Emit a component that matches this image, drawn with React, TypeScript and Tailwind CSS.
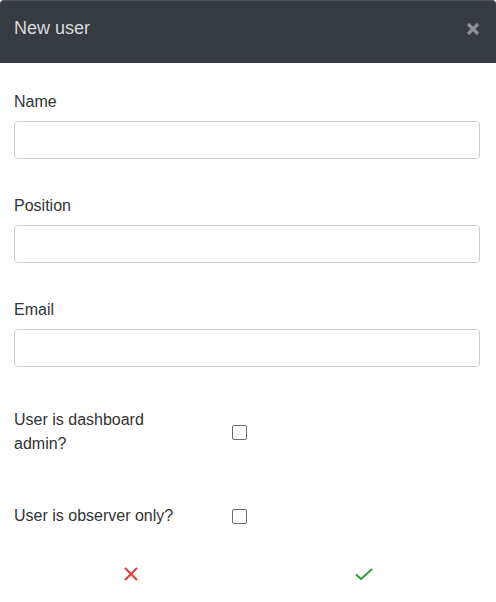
import { useState } from 'react';

const FONT = { fontFamily: '"Liberation Sans", Arial, sans-serif' };

function Field({ label }: { label: string }) {
  const [value, setValue] = useState('');
  return (
    <div className="flex flex-col gap-[7px]">
      <label className="text-[16px] leading-6 text-[#333]">{label}</label>
      <input
        value={value}
        onChange={(e) => setValue(e.target.value)}
        className="h-[38px] w-full rounded-[4px] border border-[#ccd0d6] bg-white px-3 text-[15px] outline-none focus:border-[#66afe9]"
      />
    </div>
  );
}

function CheckRow({ label }: { label: string }) {
  const [checked, setChecked] = useState(false);
  return (
    <div className="flex items-center">
      <span className="w-[170px] text-[16px] leading-6 text-[#333]">{label}</span>
      <button
        type="button"
        onClick={() => setChecked((c) => !c)}
        className="ml-[48px] flex h-[15px] w-[15px] items-center justify-center rounded-[2px] border border-[#6b6b6b] bg-white"
      >
        {checked && <span className="h-[7px] w-[7px] bg-[#333]" />}
      </button>
    </div>
  );
}

export default function App() {
  return (
    <div className="h-[602px] w-[496px] bg-white" style={FONT}>
      <div className="flex h-[63px] items-start justify-between rounded-t-[4px] border-t border-[#4b5058] bg-[#363a41] pl-[14px] pr-[16px] pt-[15px]">
        <h1 className="text-[18px] leading-6 text-[#d9dadc]">New user</h1>
        <button type="button" className="mt-[6px] text-[#8e9094]" title="Close">
          <svg width="14" height="14" viewBox="0 0 14 14">
            <path d="M2 2 L12 12 M12 2 L2 12" stroke="currentColor" strokeWidth="3.2" />
          </svg>
        </button>
      </div>

      <div className="flex flex-col pl-[14px] pr-[16px] pt-[27px]">
        <div className="flex flex-col gap-[35px]">
          <Field label="Name" />
          <Field label="Position" />
          <Field label="Email" />
        </div>

        <div className="mt-[41px] flex flex-col gap-[48px]">
          <CheckRow label="User is dashboard admin?" />
          <CheckRow label="User is observer only?" />
        </div>

        <div className="mt-[26px] grid h-[40px] grid-cols-2">
          <button type="button" className="flex items-center justify-center text-[#e03c3c]" title="Cancel">
            <svg width="16" height="16" viewBox="0 0 16 16">
              <path d="M2 2 L14 14 M14 2 L2 14" stroke="currentColor" strokeWidth="2" />
            </svg>
          </button>
          <button type="button" className="flex items-center justify-center text-[#2f9a3a]" title="Save">
            <svg width="20" height="16" viewBox="0 0 20 16">
              <path d="M2 8.5 L7 13 L18 3" stroke="currentColor" strokeWidth="2" fill="none" />
            </svg>
          </button>
        </div>
      </div>
    </div>
  );
}
